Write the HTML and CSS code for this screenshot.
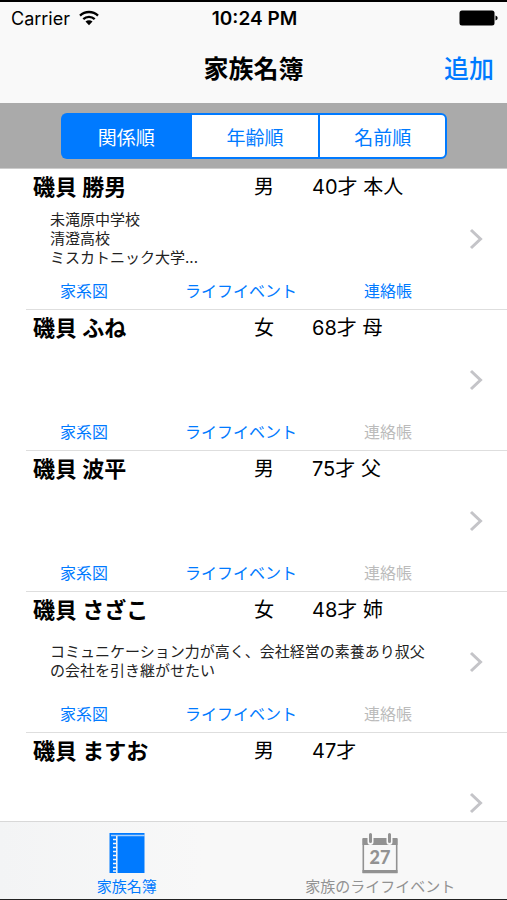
FILE: index.html
```
<!DOCTYPE html>
<html lang="ja">
<head>
    <meta charset="UTF-8">
    <meta name="viewport" content="width=device-width, initial-scale=1.0">
    <title>家族名簿</title>
    <link rel="stylesheet" href="styles.css">
</head>
<body>
    <div class="status-bar">
        <div class="carrier">
            <span>Carrier</span>
            <svg width="20" height="16" viewBox="0 0 20 16" fill="none" stroke="#000" stroke-width="2.3">
                <path d="M1 5.6a13 13 0 0 1 18 0"/>
                <path d="M4.3 9.2a8.2 8.2 0 0 1 11.4 0"/>
                <path d="M10 15.2l-3.5-3.6a5 5 0 0 1 7 0z" fill="#000" stroke="none"/>
            </svg>
        </div>
        <div class="time">10:24 PM</div>
        <div class="battery">
            <svg width="39" height="16" viewBox="0 0 39 16">
                <rect x="0.5" y="0.5" width="35" height="15" rx="2.5" fill="#000"/>
                <path d="M36.5 5.5q2.2 0.6 2.2 2.5t-2.2 2.5z" fill="#000"/>
            </svg>
        </div>
    </div>

    <header class="nav-bar">
        <h1>家族名簿</h1>
        <button class="add-button" type="button">追加</button>
    </header>

    <div class="toolbar">
        <div class="segments">
            <button class="segment active" type="button">関係順</button>
            <button class="segment" type="button">年齢順</button>
            <button class="segment" type="button">名前順</button>
        </div>
    </div>

    <ul class="people">
        <li class="row">
            <div class="person">
                <div class="head">
                    <h2>磯貝 勝男</h2>
                    <span>男</span>
                    <span>40才 本人</span>
                </div>
                <p class="note">未滝原中学校<br>清澄高校<br>ミスカトニック大学...</p>
                <div class="actions">
                    <button type="button">家系図</button>
                    <button type="button">ライフイベント</button>
                    <button type="button">連絡帳</button>
                </div>
            </div>
            <a class="detail" href="#p1" aria-label="詳細">
                <svg width="14" height="22" viewBox="0 0 14 22"><path d="M2 2l9.5 9-9.5 9"/></svg>
            </a>
        </li>
        <li class="row">
            <div class="person">
                <div class="head">
                    <h2>磯貝 ふね</h2>
                    <span>女</span>
                    <span>68才 母</span>
                </div>
                <p class="note"></p>
                <div class="actions">
                    <button type="button">家系図</button>
                    <button type="button">ライフイベント</button>
                    <button type="button" disabled>連絡帳</button>
                </div>
            </div>
            <a class="detail" href="#p2" aria-label="詳細">
                <svg width="14" height="22" viewBox="0 0 14 22"><path d="M2 2l9.5 9-9.5 9"/></svg>
            </a>
        </li>
        <li class="row">
            <div class="person">
                <div class="head">
                    <h2>磯貝 波平</h2>
                    <span>男</span>
                    <span>75才 父</span>
                </div>
                <p class="note"></p>
                <div class="actions">
                    <button type="button">家系図</button>
                    <button type="button">ライフイベント</button>
                    <button type="button" disabled>連絡帳</button>
                </div>
            </div>
            <a class="detail" href="#p3" aria-label="詳細">
                <svg width="14" height="22" viewBox="0 0 14 22"><path d="M2 2l9.5 9-9.5 9"/></svg>
            </a>
        </li>
        <li class="row">
            <div class="person">
                <div class="head">
                    <h2>磯貝 さざこ</h2>
                    <span>女</span>
                    <span>48才 姉</span>
                </div>
                <p class="note">コミュニケーション力が高く、会社経営の素養あり叔父の会社を引き継がせたい</p>
                <div class="actions">
                    <button type="button">家系図</button>
                    <button type="button">ライフイベント</button>
                    <button type="button" disabled>連絡帳</button>
                </div>
            </div>
            <a class="detail" href="#p4" aria-label="詳細">
                <svg width="14" height="22" viewBox="0 0 14 22"><path d="M2 2l9.5 9-9.5 9"/></svg>
            </a>
        </li>
        <li class="row">
            <div class="person">
                <div class="head">
                    <h2>磯貝 ますお</h2>
                    <span>男</span>
                    <span>47才</span>
                </div>
                <p class="note"></p>
            </div>
            <a class="detail" href="#p5" aria-label="詳細">
                <svg width="14" height="22" viewBox="0 0 14 22"><path d="M2 2l9.5 9-9.5 9"/></svg>
            </a>
        </li>
    </ul>

    <nav class="tab-bar">
        <a class="tab active" href="#list">
            <!-- Spiral notebook -->
            <svg width="36" height="42" viewBox="0 0 36 42">
                <rect x="0.5" y="1" width="35" height="40" fill="#007aff"/>
                <path d="M2 3.5h34" stroke="#a9d0fb" stroke-width="1.3"/>
                <path d="M7.8 4v37" stroke="#f7f7f8" stroke-width="1.5"/>
                <path d="M4 7.5h3.5M4 11.5h3.5M4 15.5h3.5M4 19.5h3.5M4 23.5h3.5M4 27.5h3.5M4 31.5h3.5M4 35.5h3.5M4 39h3.5" stroke="#f7f7f8" stroke-width="1.5"/>
            </svg>
            <span>家族名簿</span>
        </a>
        <a class="tab" href="#events">
            <!-- Calendar -->
            <svg width="36" height="42" viewBox="0 0 36 42">
                <path d="M1.3 7v33.5h33.4V7" fill="none" stroke="#929292" stroke-width="1.6"/>
                <path d="M0.5 6h35v7h-35zM0.5 38h35v3h-35z" fill="#929292"/>
                <path d="M8.5 2v8M27.5 2v8" stroke="#f8f8f8" stroke-width="6" stroke-linecap="round"/>
                <path d="M8.5 2.5v7M27.5 2.5v7" stroke="#929292" stroke-width="3" stroke-linecap="round"/>
                <text x="18" y="32" text-anchor="middle" class="day">27</text>
            </svg>
            <span>家族のライフイベント</span>
        </a>
    </nav>
</body>
</html>
```
FILE: styles.css
```
* {
    margin: 0;
    padding: 0;
    box-sizing: border-box;
}

body {
    display: flex;
    flex-direction: column;
    height: 100vh;
    font-family: Inter, "Noto Sans CJK JP", sans-serif;
    color: #000;
    background: #fff;
    border-top: 2px solid #000;
    border-bottom: 1px solid #222;
    overflow: hidden;
}

button {
    font: inherit;
    color: #007aff;
    background: none;
    border: none;
    cursor: pointer;
}

/* Status bar */
.status-bar {
    display: grid;
    grid-template-columns: 1fr auto 1fr;
    align-items: center;
    height: 32px;
    padding: 0 9px 0 11px;
    font-size: 18px;
    background: #f9f9f9;
}

.carrier {
    display: flex;
    align-items: center;
    gap: 9px;
}

.time {
    font-size: 19px;
    font-weight: 600;
}

.battery {
    display: flex;
    justify-content: flex-end;
}

/* Navigation bar */
.nav-bar {
    display: grid;
    grid-template-columns: 1fr auto 1fr;
    align-items: center;
    height: 69px;
    padding: 0 13px 4px;
    font-size: 25px;
    background: #f9f9f9;
}

.nav-bar h1 {
    grid-column: 2;
    font-size: 25px;
    font-weight: 700;
}

.add-button {
    justify-self: end;
    font-weight: 500;
}

/* Sort order */
.toolbar {
    padding: 10px 60px 9px 61px;
    background: #aaa;
    border-bottom: 1px solid #ccc;
}

.segments {
    display: grid;
    grid-template-columns: repeat(3, 1fr);
    height: 46px;
}

.segment {
    font-size: 19px;
    background: #fff;
    border: 2px solid #007aff;
    border-right: none;
}

.segment:first-child {
    border-radius: 6px 0 0 6px;
}

.segment:last-child {
    border-right: 2px solid #007aff;
    border-radius: 0 6px 6px 0;
}

.segment.active {
    color: #fff;
    background: #007aff;
}

/* Family list */
.people {
    flex: 1;
    min-height: 0;
    padding-left: 26px;
    list-style: none;
    overflow-y: auto;
    scrollbar-width: none;
}

.row {
    display: flex;
    height: 141px;
    padding-left: 7px;
    border-bottom: 1px solid #dedede;
}

.person {
    flex: 1;
    display: grid;
    grid-template-rows: 32px 74px 30px;
}

.head {
    display: grid;
    grid-template-columns: 221fr 58fr 151fr;
    align-items: center;
    font-size: 20px;
}

.head h2 {
    font-size: 22px;
    font-weight: 700;
}

.note {
    align-self: center;
    padding: 0 36px 0 17px;
    font-size: 15px;
    line-height: 19px;
    color: #222;
}

.actions {
    display: grid;
    grid-template-columns: 125fr 179fr 99fr;
    align-items: center;
    justify-items: start;
    padding-left: 27px;
    font-size: 16px;
    white-space: nowrap;
}

.actions button:disabled {
    color: #bbb;
    cursor: default;
}

.detail {
    display: flex;
    align-items: center;
    width: 44px;
    padding-left: 6px;
}

.detail path {
    fill: none;
    stroke: #c4c4c8;
    stroke-width: 3;
}

/* Tab bar */
.tab-bar {
    display: flex;
    height: 78px;
    background: linear-gradient(90deg, #f3f4f5, #f8f8f8 40%);
    border-top: 1px solid #d8d8d8;
}

.tab {
    flex: 1;
    display: flex;
    flex-direction: column;
    align-items: center;
    padding-top: 10px;
    font-size: 15px;
    line-height: 26px;
    color: #929292;
    text-decoration: none;
}

.tab svg {
    flex-shrink: 0;
}

.tab.active {
    color: #007aff;
}

.day {
    font: 900 18px Lato, sans-serif;
    fill: #929292;
}
```
